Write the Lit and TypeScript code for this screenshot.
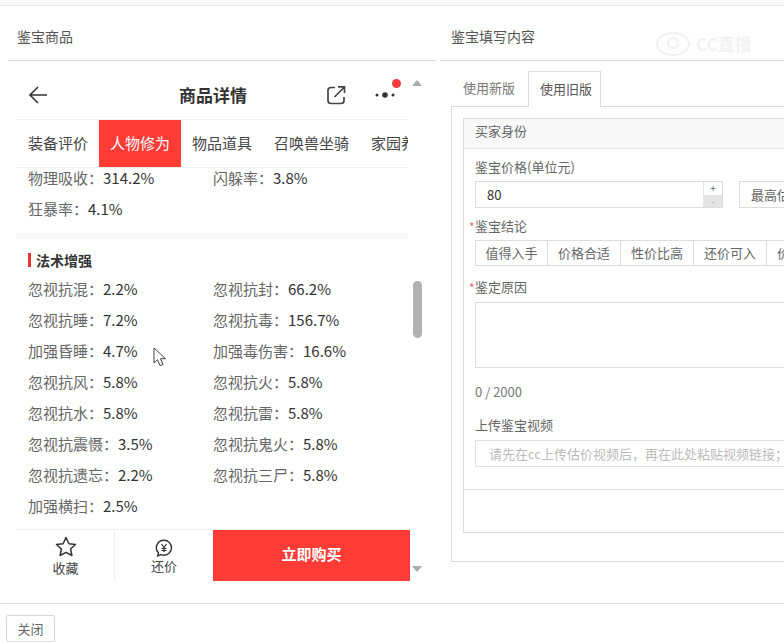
import { LitElement, html, css } from "lit";
import { customElement } from "lit/decorators.js";

const top = [
  ["物理吸收", "314.2%", "闪躲率", "3.8%"],
  ["狂暴率", "4.1%"],
];
const magic = [
  ["忽视抗混", "2.2%", "忽视抗封", "66.2%"],
  ["忽视抗睡", "7.2%", "忽视抗毒", "156.7%"],
  ["加强昏睡", "4.7%", "加强毒伤害", "16.6%"],
  ["忽视抗风", "5.8%", "忽视抗火", "5.8%"],
  ["忽视抗水", "5.8%", "忽视抗雷", "5.8%"],
  ["忽视抗震慑", "3.5%", "忽视抗鬼火", "5.8%"],
  ["忽视抗遗忘", "2.2%", "忽视抗三尸", "5.8%"],
  ["加强横扫", "2.5%"],
];

@customElement("app-root")
export class AppRoot extends LitElement {
  static styles = css`
    :host {
      display: block;
      position: relative;
      width: 784px;
      height: 642px;
      overflow: hidden;
      background: #fff;
      font-family: "Noto Sans CJK SC", "Noto Sans", sans-serif;
      color: #666;
      font-size: 13px;
    }
    .strip { height: 5px; background: #f8f8f8; border-bottom: 1px solid #e6e6e6; }
    .panels { display: flex; height: 597px; }
    .left { width: 428px; margin-left: 8px; flex: none; }
    .right { width: 344px; margin-left: 4px; flex: none; }
    .ptitle {
      height: 54px;
      line-height: 60px;
      border-bottom: 1px solid #dcdcdc;
      font-size: 14px;
      color: #555;
    }
    .left .ptitle { padding-left: 9px; }
    .right .ptitle { padding-left: 11px; }
    .lbody { display: flex; padding-left: 8px; }
    .phone { width: 392px; height: 520px; display: flex; flex-direction: column; flex: none; }
    .head {
      height: 48px;
      padding: 10px 0 0 12px;
      display: flex;
      align-items: center;
      position: relative;
      border-bottom: 1px solid #efefef;
    }
    .head .t {
      flex: 1;
      font-size: 17px;
      font-weight: 700;
      color: #333;
      padding-left: 131px;
      margin-top: -2px;
    }
    .share { margin-right: 28px; flex: none; }
    .dots { margin-right: 12px; flex: none; }
    .red {
      position: absolute;
      left: 376px;
      top: 18px;
      width: 9px;
      height: 9px;
      border-radius: 50%;
      background: #f23c3c;
    }
    .tabs {
      height: 47px;
      display: flex;
      overflow: hidden;
      padding-left: 1px;
      border-bottom: 1px solid #efefef;
      font-size: 15px;
      color: #444;
      white-space: nowrap;
      flex: none;
    }
    .tabs div { padding: 0 11px; line-height: 46px; flex: none; }
    .tabs .on { background: #ff3b36; color: #fff; }
    .scroll { flex: 1; overflow: hidden; min-height: 0; }
    .inner { margin-top: -6px; padding-left: 12px; }
    .row { display: grid; grid-template-columns: 185px 185px; height: 31px; line-height: 31px; font-size: 15px; color: #666; white-space: nowrap; }
    .row b { font-weight: 400; color: #333; }
    .sep { height: 6px; background: #f8f8f8; margin: 9px 0 0 -12px; }
    .h { height: 26px; padding-top: 2px; margin-top: 6px; display: flex; align-items: center; gap: 5px; font-size: 14px; font-weight: 700; color: #333; }
    .h i { width: 3px; height: 14px; background: #e8342f; }
    .foot { height: 51px; display: flex; border-top: 1px solid #efefef; flex: none; width: 394px; }
    .cell {
      width: 98px;
      box-sizing: border-box;
      display: flex;
      flex-direction: column;
      align-items: center;
      font-size: 13px;
      color: #444;
      line-height: 18px;
      padding-top: 9px;
    }
    .cell.a { width: 99px; padding-top: 6px; padding-left: 1px; border-right: 1px solid #efefef; }
    .cell.a span { margin-top: 2px; }
    .buy {
      flex: 1;
      background: #ff3b36;
      color: #fff;
      font-size: 15px;
      font-weight: 700;
      text-align: center;
      line-height: 48px;
    }
    .track { width: 14px; margin-left: 2px; display: flex; flex-direction: column; align-items: center; height: 520px; }
    .up { margin-top: 19px; width: 0; height: 0; border: 5px solid transparent; border-top: 0; border-bottom: 6px solid #aaa; }
    .thumb { margin-top: 195px; width: 9px; height: 57px; border-radius: 5px; background: #b2b2b2; }
    .down { margin-top: 228px; width: 0; height: 0; border: 5px solid transparent; border-bottom: 0; border-top: 6px solid #aaa; }

    .nav { display: flex; height: 46px; padding: 10px 0 0 11px; box-sizing: border-box; align-items: stretch; }
    .nav div { line-height: 34px; padding: 0 12px; margin-right: 1px; color: #777; }
    .nav .on {
      border: 1px solid #dcdcdc;
      border-bottom: 0;
      background: #fff;
      padding: 0 8px 0 11px;
      color: #555;
      position: relative;
      height: 36px;
      box-sizing: border-box;
      z-index: 1;
    }
    .pane {
      margin-left: 11px;
      border: 1px solid #dcdcdc;
      border-right: 0;
      width: 600px;
      height: 456px;
      padding: 11px;
      box-sizing: border-box;
      margin-top: -1px;
    }
    .box { border: 1px solid #dcdcdc; height: 415px; width: 640px; box-sizing: border-box; }
    .bh { height: 29px; line-height: 24px; background: #f8f8f8; border-bottom: 1px solid #e4e4e4; padding-left: 11px; color: #666; }
    .bb { padding: 0 0 0 11px; height: 341px; border-bottom: 1px solid #e4e4e4; box-sizing: border-box; }
    .lab { line-height: 20px; color: #666; position: relative; }
    .l1 { padding-top: 8px; }
    .l2 { padding-top: 8px; height: 32px; box-sizing: border-box; }
    .l3 { height: 25px; }
    .l4 { margin-top: 13px; height: 25px; }
    .star { position: absolute; left: -6px; top: 1px; color: #e86a6a; font-size: 12px; }
    .l2 .star { top: 9px; }
    .inrow { display: flex; gap: 16px; margin-top: 4px; }
    .num { width: 248px; height: 27px; border: 1px solid #dcdcdc; box-sizing: border-box; display: flex; }
    .num .v { flex: 1; padding-left: 11px; line-height: 25px; color: #333; font-size: 13px; }
    .spin { width: 18px; border-left: 1px solid #e4e4e4; display: flex; flex-direction: column; text-align: center; font-size: 10px; color: #666; }
    .spin span { height: 12.500px; line-height: 12px; }
    .spin .m { background: #e4e4e4; color: #aaa; }
    .mx { height: 27px; border: 1px solid #dcdcdc; box-sizing: border-box; padding: 0 11px; line-height: 25px; width: 100px; white-space: nowrap; color: #666; }
    .grp { display: flex; height: 26px; margin-bottom: 11px; }
    .grp div { width: 73px; box-sizing: border-box; border: 1px solid #dcdcdc; border-left: 0; text-align: center; line-height: 24px; color: #666; flex: none; }
    .grp div:first-child { border-left: 1px solid #dcdcdc; }
    .ta { height: 66px; border: 1px solid #dcdcdc; box-sizing: border-box; width: 500px; }
    .cnt { margin-top: 14px; line-height: 20px; color: #777; font-size: 13px; }
    .ph { height: 27px; border: 1px solid #e0e0e0; box-sizing: border-box; width: 500px; padding-left: 13px; line-height: 25px; color: #bbb; white-space: nowrap; overflow: hidden; }

    .bottom { height: 39px; border-top: 1px solid #e0e0e0; padding: 11px 0 0 6px; box-sizing: border-box; }
    .close { display: block; width: 49px; height: 27px; box-sizing: border-box; border: 1px solid #d8d8d8; border-radius: 2px; text-align: center; line-height: 25px; color: #666; font-size: 13px; }

    .mark { position: absolute; left: 655px; top: 29px; display: flex; align-items: center; gap: 3px; color: #f2f2f2; font-size: 17px; font-weight: 700; }
    .cursor { position: absolute; left: 153px; top: 347px; }
  `;

  private rows(list: string[][]) {
    return list.map(
      (r) => html`<div class="row">
        <span>${r[0]}：<b>${r[1]}</b></span>
        ${r[2] ? html`<span>${r[2]}：<b>${r[3]}</b></span>` : ""}
      </div>`
    );
  }

  render() {
    return html`
      <div class="strip"></div>
      <div class="panels">
        <section class="left">
          <div class="ptitle">鉴宝商品</div>
          <div class="lbody">
            <div class="phone">
              <div class="head">
                <svg width="20" height="20" viewBox="0 0 20 20" fill="none" stroke="#333" stroke-width="1.6">
                  <path d="M19 10H2M10 2l-8 8 8 8" />
                </svg>
                <div class="t">商品详情</div>
                <svg class="share" width="20" height="20" viewBox="0 0 20 20" fill="none" stroke="#444" stroke-width="1.7">
                  <path d="M9 2.500H5A3 3 0 0 0 2 5.500v10A3 3 0 0 0 5 18.500h10a3 3 0 0 0 3-3V12" />
                  <path d="M8.500 12L18 2.500M12 1.800h6.500V8" />
                </svg>
                <svg class="dots" width="22" height="8" viewBox="0 0 22 8" fill="#333">
                  <circle cx="3" cy="4" r="1.500" /><circle cx="11" cy="4" r="2.800" /><circle cx="19" cy="4" r="1.500" />
                </svg>
                <span class="red"></span>
              </div>
              <div class="tabs">
                <div>装备评价</div>
                <div class="on">人物修为</div>
                <div>物品道具</div>
                <div>召唤兽坐骑</div>
                <div>家园养成</div>
              </div>
              <div class="scroll">
                <div class="inner">
                  ${this.rows(top)}
                  <div class="sep"></div>
                  <div class="h"><i></i>法术增强</div>
                  ${this.rows(magic)}
                </div>
              </div>
              <div class="foot">
                <div class="cell a">
                  <svg width="22" height="21" viewBox="0 0 22 21" fill="none" stroke="#333" stroke-width="1.500" stroke-linejoin="round">
                    <path d="M11 1.500l2.900 6.200 6.600.8-4.900 4.500 1.300 6.500L11 16.300l-5.900 3.200 1.300-6.500L1.500 8.500l6.600-.8z" />
                  </svg>
                  <span>收藏</span>
                </div>
                <div class="cell">
                  <svg width="18" height="18" viewBox="0 0 18 18" fill="none" stroke="#333" stroke-width="1.400">
                    <path transform="matrix(-1 0 0 1 18 0)" d="M9 1.200a7.500 7.500 0 1 0 0 15c1 0 2-.2 3-.6l3.300 1.300-.7-3.100A7.500 7.500 0 0 0 9 1.200z" />
                    <path d="M6.500 5L9 8.500 11.500 5M9 8.500V13M6.500 9.500h5M6.500 11.500h5" stroke-width="1.200" />
                  </svg>
                  <span>还价</span>
                </div>
                <div class="buy">立即购买</div>
              </div>
            </div>
            <div class="track">
              <span class="up"></span>
              <span class="thumb"></span>
              <span class="down"></span>
            </div>
          </div>
        </section>
        <section class="right">
          <div class="ptitle">鉴宝填写内容</div>
          <div class="nav">
            <div>使用新版</div>
            <div class="on">使用旧版</div>
          </div>
          <div class="pane">
            <div class="box">
              <div class="bh">买家身份</div>
              <div class="bb">
                <div class="lab l1">鉴宝价格(单位元)</div>
                <div class="inrow">
                  <div class="num">
                    <span class="v">80</span>
                    <span class="spin"><span>+</span><span class="m">-</span></span>
                  </div>
                  <div class="mx">最高估价</div>
                </div>
                <div class="lab l2"><span class="star">*</span>鉴宝结论</div>
                <div class="grp">
                  <div>值得入手</div><div>价格合适</div><div>性价比高</div><div>还价可入</div><div>价格偏高</div>
                </div>
                <div class="lab l3"><span class="star">*</span>鉴定原因</div>
                <div class="ta"></div>
                <div class="cnt">0 / 2000</div>
                <div class="lab l4">上传鉴宝视频</div>
                <div class="ph">请先在cc上传估价视频后，再在此处粘贴视频链接；视频链接需为cc平台的视频地址</div>
              </div>
            </div>
          </div>
        </section>
      </div>
      <div class="bottom"><span class="close">关闭</span></div>
      <div class="mark" aria-hidden="true">
        <svg width="38" height="28" viewBox="0 0 38 28" fill="none" stroke="#f0f0f0" stroke-width="2">
          <ellipse cx="18" cy="15" rx="16" ry="11" /><circle cx="18" cy="14" r="5" />
        </svg>
        <span>CC直播</span>
      </div>
      <svg class="cursor" width="14" height="21" viewBox="0 0 14 21" fill="#fff" stroke="#444" stroke-width="1">
        <path d="M1 1v15l3.500-3.300 2.500 6 3-1.300-2.500-5.700H12.500z" />
      </svg>
    `;
  }
}
